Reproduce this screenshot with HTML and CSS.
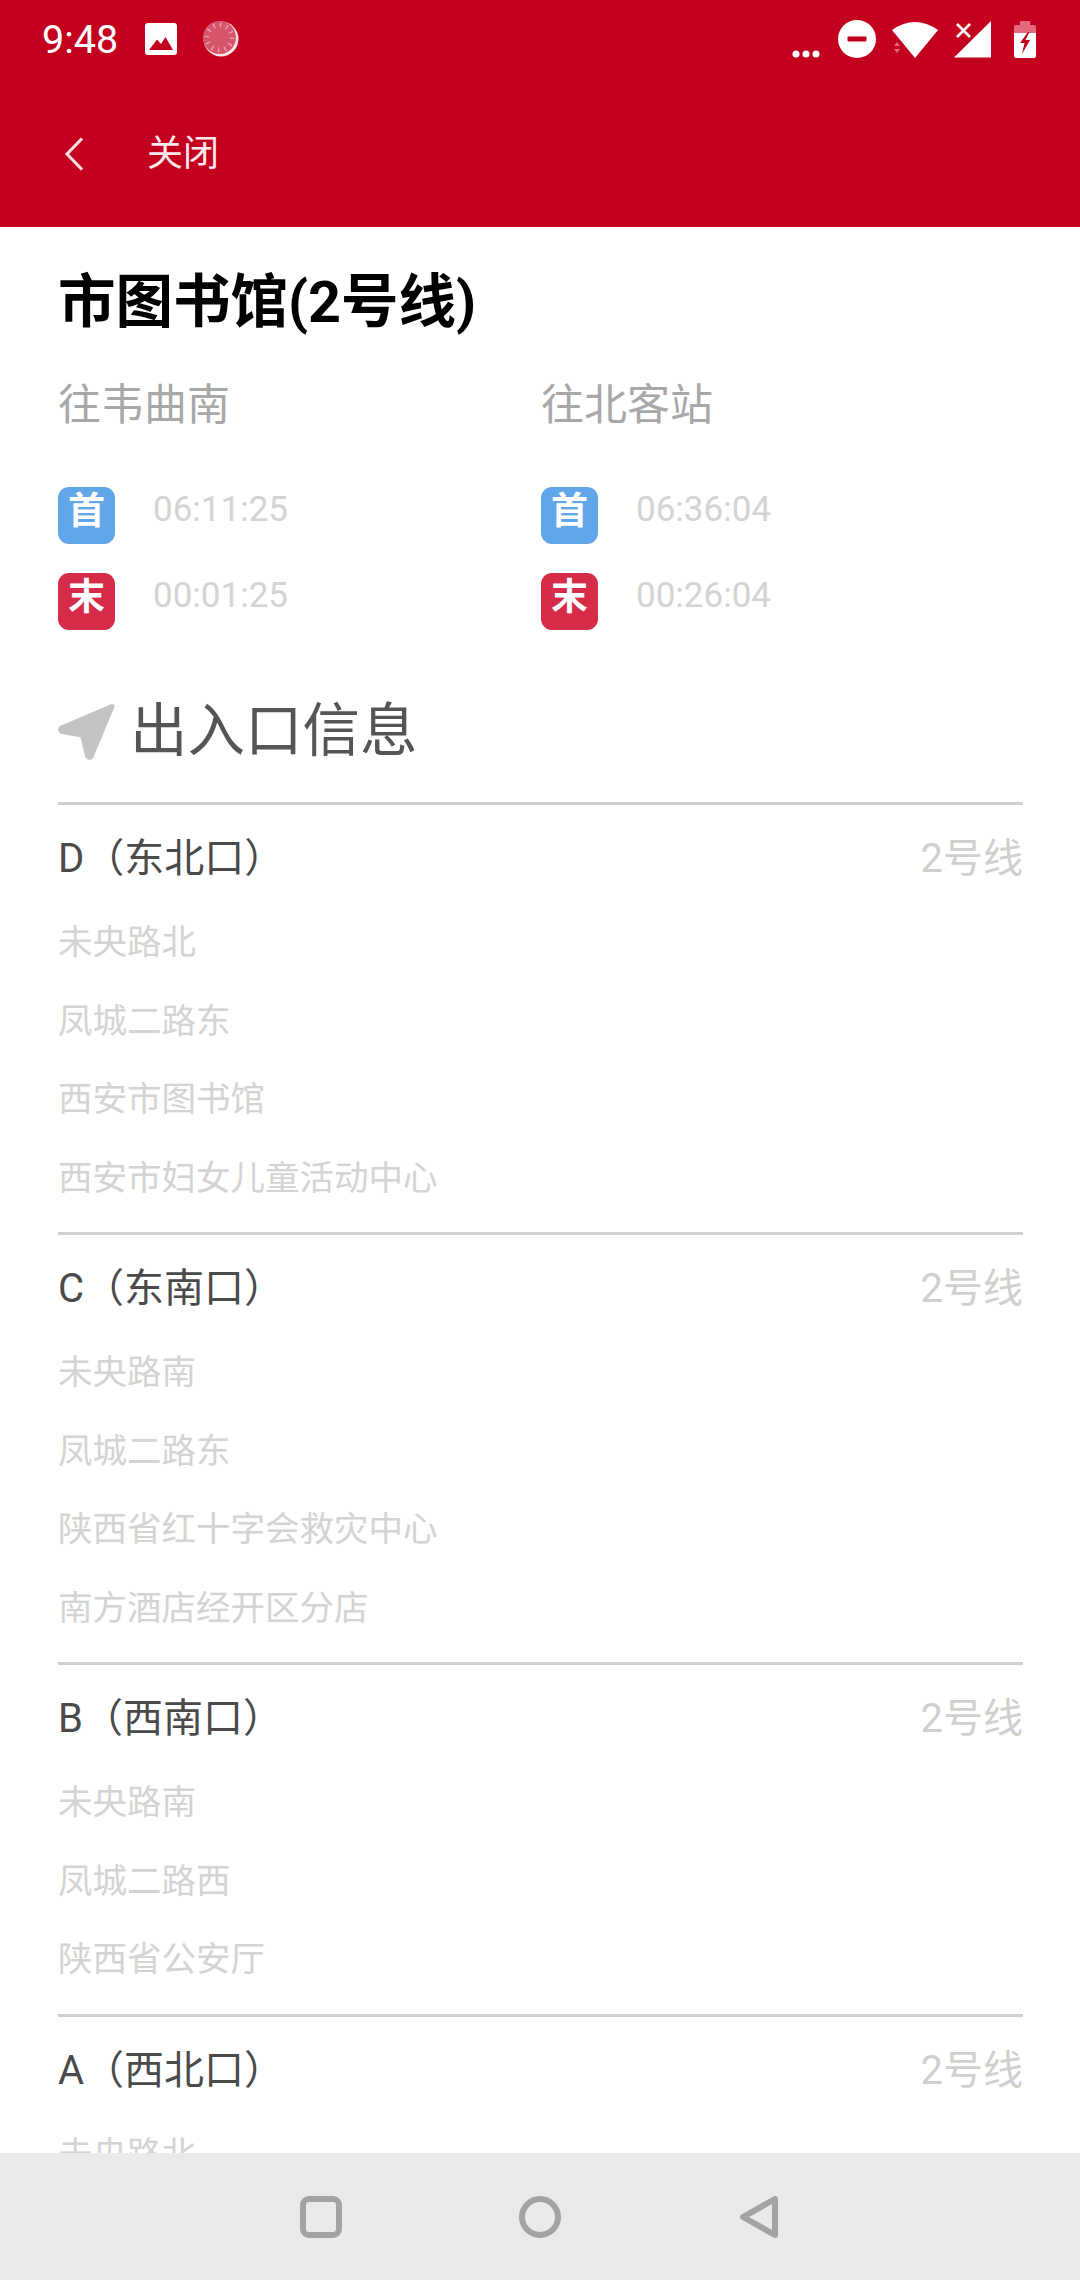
FILE: index.html
```html
<!DOCTYPE html>
<html lang="zh-CN">
<head>
<meta charset="utf-8">
<title>市图书馆(2号线)</title>
<link rel="stylesheet" href="styles.css">
</head>
<body>
<div class="screen">
  <header class="appbar">
    <div class="status">
      <span class="clock">9:48</span>
      <svg class="ic-photo" viewBox="0 0 32 32"><rect width="32" height="32" rx="3" fill="#fff"/><path d="M4 27 L12 16.5 L16 21 L20.5 14 L28 27 Z" fill="#c4001f"/></svg>
      <svg class="ic-spin" viewBox="0 0 36 36"><circle cx="18" cy="18" r="17.5" fill="#fbe3e7"/><circle cx="16.5" cy="16.5" r="16.5" fill="#d6546c"/><circle cx="16.5" cy="16.5" r="12.5" fill="none" stroke="#ee9fae" stroke-width="5" stroke-dasharray="1.4 5.15"/></svg>
      <span class="status-fill"></span>
      <svg class="ic-dots" viewBox="0 0 28 8"><circle cx="4" cy="4" r="3.5" fill="#fff"/><circle cx="14" cy="4" r="3.5" fill="#fff"/><circle cx="24" cy="4" r="3.5" fill="#fff"/></svg>
      <svg class="ic-dnd" viewBox="0 0 38 38"><circle cx="19" cy="19" r="19" fill="#fff"/><rect x="9.5" y="16.5" width="19" height="5" rx="1" fill="#c4001f"/></svg>
      <svg class="ic-wifi" viewBox="0 0 46 37"><path d="M23 37 L0 9 Q23 -7 46 9 Z" fill="#fff"/><path d="M2 25 L5 21 L8 25 Z M2 28 L8 28 L5 32 Z" fill="#e5697f"/></svg>
      <svg class="ic-signal" viewBox="0 0 38 38"><path d="M0 37.500 L37 1 V37.500 Z" fill="#fff"/><path d="M3 4 L16 17 M16 4 L3 17" stroke="#fff" stroke-width="2.500"/></svg>
      <svg class="ic-battery" viewBox="0 0 22 37"><path d="M6 0 H16 V4 H20 Q22 4 22 6 V12 H0 V6 Q0 4 2 4 H6 Z" fill="#e5697f"/><path d="M0 12 H22 V35 Q22 37 20 37 H2 Q0 37 0 35 Z" fill="#fff"/><path d="M14 11 L6 22 H10.500 L8 33 L16 19 H11.500 L15.500 11 Z" fill="#c4001f"/></svg>
    </div>
    <div class="toolbar">
      <svg class="ic-back" viewBox="0 0 20 34"><path d="M18 1.500 L3 17 L18 32.500" fill="none" stroke="#fbe3e7" stroke-width="3"/></svg>
      <span class="close-label">关闭</span>
    </div>
  </header>

  <main class="content">
    <h1 class="station">市图书馆(2号线)</h1>

    <section class="timetable">
      <div class="direction">
        <h2 class="dir-name">往韦曲南</h2>
        <div class="time-row"><span class="badge badge-first">首</span><span class="time">06:11:25</span></div>
        <div class="time-row"><span class="badge badge-last">末</span><span class="time">00:01:25</span></div>
      </div>
      <div class="direction">
        <h2 class="dir-name">往北客站</h2>
        <div class="time-row"><span class="badge badge-first">首</span><span class="time">06:36:04</span></div>
        <div class="time-row"><span class="badge badge-last">末</span><span class="time">00:26:04</span></div>
      </div>
    </section>

    <h2 class="section-title">
      <svg class="ic-nav" viewBox="0 0 58 58"><path d="M54 3.500 L3.500 25 Q1.500 27 4 28.500 L24.500 32 L29.500 53 Q31 55.500 33 53.500 Z" fill="#c4c4c4" stroke="#c4c4c4" stroke-width="5" stroke-linejoin="round"/></svg>
      <span>出入口信息</span>
    </h2>

    <article class="exit">
      <div class="exit-head"><span class="exit-name">D（东北口）</span><span class="exit-line">2号线</span></div>
      <ul class="places"><li>未央路北</li><li>凤城二路东</li><li>西安市图书馆</li><li>西安市妇女儿童活动中心</li></ul>
    </article>
    <article class="exit">
      <div class="exit-head"><span class="exit-name">C（东南口）</span><span class="exit-line">2号线</span></div>
      <ul class="places"><li>未央路南</li><li>凤城二路东</li><li>陕西省红十字会救灾中心</li><li>南方酒店经开区分店</li></ul>
    </article>
    <article class="exit">
      <div class="exit-head"><span class="exit-name">B（西南口）</span><span class="exit-line">2号线</span></div>
      <ul class="places"><li>未央路南</li><li>凤城二路西</li><li>陕西省公安厅</li></ul>
    </article>
    <article class="exit">
      <div class="exit-head"><span class="exit-name">A（西北口）</span><span class="exit-line">2号线</span></div>
      <ul class="places"><li>未央路北</li></ul>
    </article>
  </main>

  <nav class="navbar">
    <svg class="nav-ic" viewBox="0 0 44 44"><rect x="4" y="4" width="36" height="36" rx="6" fill="none" stroke="#a3a3a3" stroke-width="6"/></svg>
    <svg class="nav-ic" viewBox="0 0 44 44"><circle cx="22" cy="22" r="18" fill="none" stroke="#a3a3a3" stroke-width="6"/></svg>
    <svg class="nav-ic" viewBox="0 0 44 44"><path d="M38 4 V40 L6 22 Z" fill="none" stroke="#a3a3a3" stroke-width="6" stroke-linejoin="round"/></svg>
  </nav>
</div>
</body>
</html>
```
FILE: styles.css
```css
* { box-sizing: border-box; }
html, body { margin: 0; padding: 0; }
body {
  background: #fff;
  font-family: Roboto, "Noto Sans CJK SC", sans-serif;
}
.screen {
  width: 1080px;
  height: 2280px;
  display: flex;
  flex-direction: column;
  overflow: hidden;
}
.appbar { background: #c4001f; height: 227px; flex: none; color: #fff; }
.status {
  height: 76px;
  display: flex;
  align-items: center;
  padding: 2px 44px 0 42px;
}
.clock { font-size: 39.500px; line-height: 1; width: 103px; padding-top: 2px; }
.ic-photo { width: 32px; height: 32px; }
.ic-spin { width: 36px; height: 36px; margin-left: 26px; }
.status-fill { flex: 1; }
.ic-dots { width: 28px; height: 8px; margin-top: 30px; }
.ic-dnd { width: 38px; height: 38px; margin-left: 18px; }
.ic-wifi { width: 46px; height: 37px; margin-left: 16px; }
.ic-signal { width: 38px; height: 38px; margin-left: 16px; }
.ic-battery { width: 22px; height: 37px; margin-left: 22px; }
.toolbar {
  height: 151px;
  display: flex;
  align-items: center;
  padding: 5px 0 0 64px;
}
.ic-back { width: 20px; height: 34px; }
.close-label { font-size: 36px; line-height: 1; margin-left: 63px; color: #fbe9ec; }

.content {
  flex: 1;
  min-height: 0;
  overflow: hidden;
  padding: 36px 57px 0 58px;
}
.station {
  margin: 0;
  font-size: 57.500px;
  line-height: 80px;
  font-weight: 700;
  color: #000;
}
.timetable {
  display: grid;
  grid-template-columns: 483px 1fr;
  margin-top: 32px;
}
.dir-name {
  margin: 0 0 52px;
  font-size: 43px;
  line-height: 60px;
  font-weight: 400;
  color: #a8a8a8;
}
.time-row {
  display: flex;
  align-items: flex-start;
  gap: 38px;
  height: 57px;
  margin-bottom: 29px;
}
.time-row:last-child { margin-bottom: 0; }
.badge {
  width: 57px;
  height: 57px;
  border-radius: 11px;
  color: #fff;
  font-size: 37px;
  line-height: 50px;
  font-weight: 700;
  text-align: center;
}
.badge-first { background: #62a6ea; }
.badge-last { background: #d62c4a; }
.time { font-size: 35px; line-height: 46px; color: #d4d4d4; }

.section-title {
  margin: 62px 0 30px;
  display: flex;
  align-items: center;
  gap: 14px;
  height: 80px;
  font-size: 57.500px;
  line-height: 80px;
  font-weight: 400;
  color: #555;
}
.ic-nav { width: 58px; height: 58px; }
.exit {
  border-top: 3px solid #d0d0d0;
  padding: 14px 0 15px;
}
.exit-head {
  display: flex;
  justify-content: space-between;
  align-items: center;
  height: 72px;
  margin-bottom: 12px;
}
.exit-name { font-size: 40px; color: #4a4a4a; }
.exit-line { font-size: 40px; color: #d0d0d0; }
.places { list-style: none; margin: 0; padding: 0; }
.places li { font-size: 34.500px; line-height: 78.500px; color: #d4d4d4; }

.navbar {
  flex: none;
  height: 127px;
  background: #eaeaea;
  display: flex;
  justify-content: center;
  align-items: center;
  gap: 175px;
}
.nav-ic { width: 44px; height: 44px; }
```
